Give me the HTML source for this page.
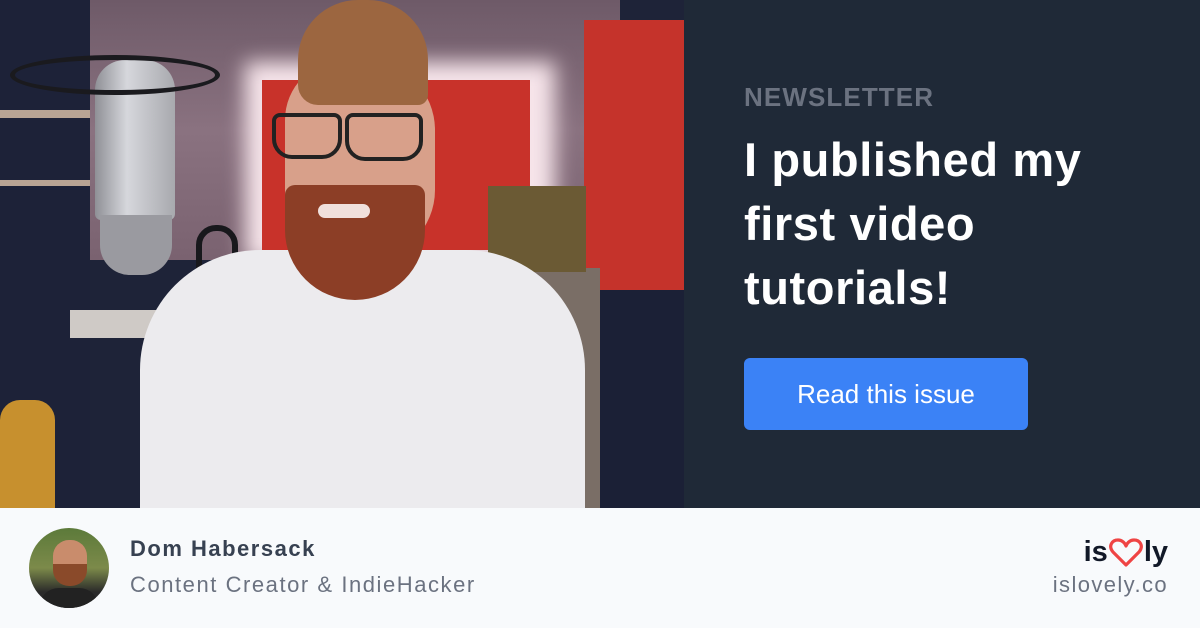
<!DOCTYPE html>
<html><head><meta charset="utf-8"><style>
*{margin:0;padding:0;box-sizing:border-box}
body{width:1200px;height:628px;overflow:hidden;font-family:"Liberation Sans",sans-serif;background:#f8fafc;position:relative}
.a{position:absolute}
</style></head><body>
<div class="a" style="left:0;top:0;width:684px;height:508px;overflow:hidden;background:#1e2338">
  <div class="a" style="left:60px;top:0;width:560px;height:260px;background:linear-gradient(180deg,#6e5a68,#8a7280 50%,#7a6270)"></div>
  <div class="a" style="left:0;top:0;width:90px;height:508px;background:#1d2238"></div>
  <div class="a" style="left:0;top:110px;width:90px;height:8px;background:#b8a494"></div>
  <div class="a" style="left:0;top:180px;width:90px;height:6px;background:#b8a494"></div>
  <div class="a" style="left:245px;top:62px;width:310px;height:200px;background:#f6e4ea;filter:blur(10px)"></div>
  <div class="a" style="left:262px;top:80px;width:268px;height:170px;background:#c8322a"></div>
  <div class="a" style="left:584px;top:20px;width:100px;height:270px;background:#c5332b"></div>
  <div class="a" style="left:580px;top:290px;width:104px;height:218px;background:#1b2036"></div>
  <div class="a" style="left:460px;top:268px;width:140px;height:240px;background:#7a6e66"></div>
  <div class="a" style="left:488px;top:186px;width:98px;height:86px;background:#6b5a34"></div>
  <div class="a" style="left:0;top:400px;width:55px;height:108px;background:#c7902e;border-radius:20px 20px 0 0"></div>
  <div class="a" style="left:70px;top:310px;width:95px;height:28px;background:#cfcac6"></div>
  <div class="a" style="left:95px;top:60px;width:80px;height:160px;background:linear-gradient(90deg,#8f9096,#d6d7dc 40%,#a8a9ae);border-radius:30px 30px 6px 6px"></div>
  <div class="a" style="left:100px;top:215px;width:72px;height:60px;background:#9a9aa0;border-radius:0 0 30px 30px"></div>
  <div class="a" style="left:10px;top:55px;width:210px;height:40px;border:5px solid #1a1a1e;border-radius:50%"></div>
  <div class="a" style="left:196px;top:225px;width:42px;height:95px;border:6px solid #18181c;border-radius:20px"></div>
  <div class="a" style="left:140px;top:250px;width:445px;height:300px;background:#ecebee;border-radius:120px 120px 0 0"></div>
  <div class="a" style="left:285px;top:60px;width:150px;height:200px;background:#d8a08a;border-radius:60px 70px 70px 70px"></div>
  <div class="a" style="left:298px;top:0px;width:130px;height:105px;background:#9c6640;border-radius:60px 60px 10px 20px"></div>
  <div class="a" style="left:285px;top:185px;width:140px;height:115px;background:#8c3e26;border-radius:10px 10px 70px 70px"></div>
  <div class="a" style="left:318px;top:204px;width:52px;height:14px;background:#f0e0dc;border-radius:8px"></div>
  <div class="a" style="left:272px;top:113px;width:70px;height:46px;border:4px solid #222;border-radius:8px 8px 20px 20px"></div>
  <div class="a" style="left:345px;top:113px;width:78px;height:48px;border:4px solid #222;border-radius:8px 8px 20px 20px"></div>
</div>
<div class="a" style="left:684px;top:0;width:516px;height:508px;background:#1f2937"></div>
<div class="a" style="left:744px;top:82px;font-size:26px;font-weight:bold;color:#6b7280;letter-spacing:1.1px">NEWSLETTER</div>
<div class="a" style="left:744px;top:128px;font-size:47px;font-weight:bold;color:#fff;line-height:64px;width:440px;letter-spacing:0.6px">I published my<br>first video<br>tutorials!</div>
<div class="a" style="left:744px;top:358px;width:284px;height:72px;background:#3b82f6;border-radius:6px;color:#fff;font-size:26px;line-height:72px;text-align:center">Read this issue</div>
<div class="a" style="left:29px;top:528px;width:80px;height:80px;border-radius:50%;overflow:hidden;background:linear-gradient(180deg,#5c7a3a,#7c8a4a 50%,#2a2a2a 80%)">
  <div class="a" style="left:24px;top:12px;width:34px;height:44px;background:#c98c6c;border-radius:16px"></div>
  <div class="a" style="left:24px;top:36px;width:34px;height:22px;background:#8a4a2a;border-radius:0 0 16px 16px"></div>
  <div class="a" style="left:10px;top:60px;width:60px;height:30px;background:#222;border-radius:20px 20px 0 0"></div>
</div>
<div class="a" style="left:130px;top:536px;font-size:22px;font-weight:bold;color:#374151;letter-spacing:1.5px">Dom Habersack</div>
<div class="a" style="left:130px;top:572px;font-size:22px;color:#6b7280;letter-spacing:1.55px">Content Creator &amp; IndieHacker</div>
<div class="a" style="right:32px;top:536px;font-size:29px;font-weight:bold;color:#111827;display:flex;align-items:center">is<svg width="34" height="30" viewBox="0 0 34 30" style="margin:0 1px"><path d="M17 27 L4 14 C-1 8 3 2 9 2 C13 2 16 5 17 8 C18 5 21 2 25 2 C31 2 35 8 30 14 Z" fill="none" stroke="#ef4444" stroke-width="3.2" stroke-linejoin="round"/></svg>ly</div>
<div class="a" style="right:32px;top:572px;font-size:22px;color:#6b7280;letter-spacing:1.4px">islovely.co</div>
</body></html>
